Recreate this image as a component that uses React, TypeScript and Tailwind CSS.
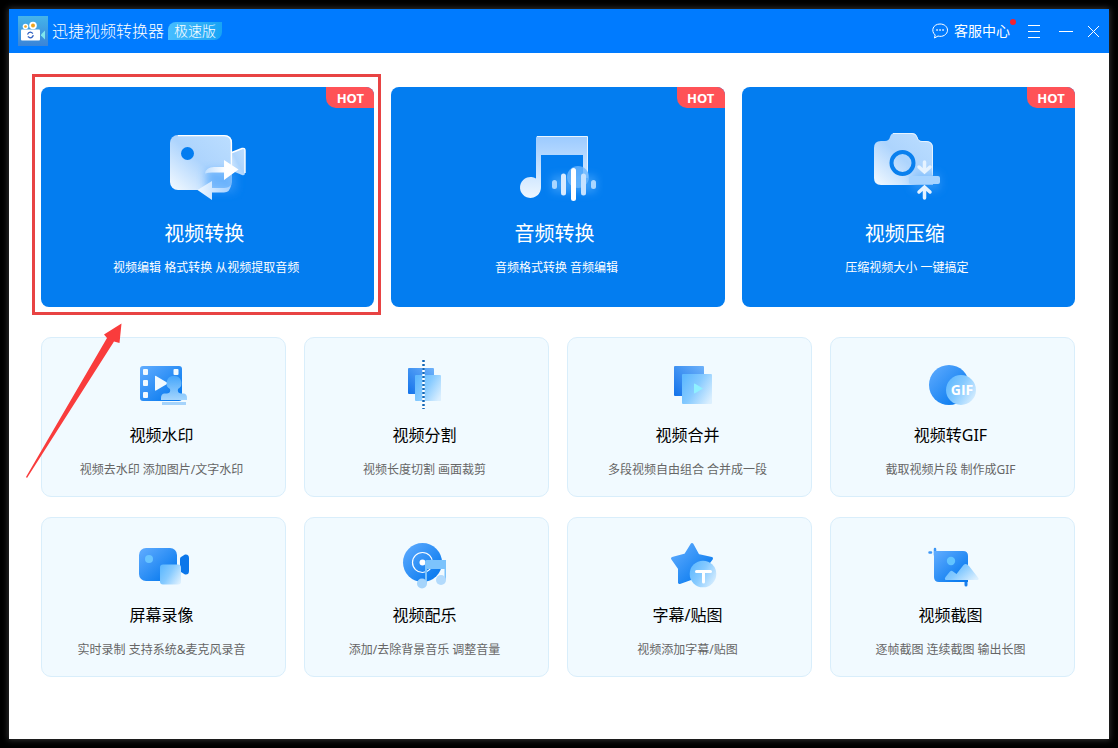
import type { ReactNode } from 'react';

type CardItem = {
    title: string;
    text: string;
    icon: ReactNode;
};

// gradients shared by all the icons
const IconDefs = () => (
    <svg className="absolute h-0 w-0" aria-hidden="true">
        <defs>
            <linearGradient id="glass" x1="1" y1="0" x2="0" y2="1">
                <stop offset="0" stopColor="#bcdeff" />
                <stop offset="0.5" stopColor="#add4fd" />
                <stop offset="1" stopColor="#f4faff" />
            </linearGradient>
            <linearGradient id="glassDown" x1="0" y1="0" x2="0" y2="1">
                <stop offset="0" stopColor="#9bcaff" />
                <stop offset="1" stopColor="#eef7ff" />
            </linearGradient>
            <linearGradient id="whiteRight" x1="0" y1="0" x2="1" y2="0">
                <stop offset="0" stopColor="#c2e0ff" />
                <stop offset="0.6" stopColor="#ffffff" />
            </linearGradient>
            <linearGradient id="whiteLeft" x1="1" y1="0" x2="0" y2="0">
                <stop offset="0" stopColor="#a4d0ff" />
                <stop offset="1" stopColor="#f2f9ff" />
            </linearGradient>
            <linearGradient id="deep" x1="0" y1="0" x2="1" y2="1">
                <stop offset="0" stopColor="#62adff" />
                <stop offset="0.8" stopColor="#0f7ef0" />
                <stop offset="1" stopColor="#0a78ec" />
            </linearGradient>
            <linearGradient id="deepUp" x1="1" y1="0" x2="0" y2="1">
                <stop offset="0" stopColor="#6fb2fa" />
                <stop offset="1" stopColor="#1272ea" />
            </linearGradient>
            <linearGradient id="soft" x1="0" y1="0.2" x2="1" y2="0.8">
                <stop offset="0" stopColor="#5fb9ff" />
                <stop offset="0.45" stopColor="#86caff" />
                <stop offset="1" stopColor="#dbeffe" />
            </linearGradient>
            <linearGradient id="softDown" x1="0" y1="0" x2="0" y2="1">
                <stop offset="0" stopColor="#45a6fb" />
                <stop offset="1" stopColor="#a4d5fd" />
            </linearGradient>
            <linearGradient id="logoBg" x1="0" y1="0" x2="0" y2="1">
                <stop offset="0" stopColor="#45b4ea" />
                <stop offset="1" stopColor="#3a84d8" />
            </linearGradient>
            <filter id="glow" x="-50%" y="-80%" width="200%" height="260%">
                <feGaussianBlur stdDeviation="4" />
            </filter>
        </defs>
    </svg>
);

const Logo = () => (
    <svg width="30" height="30" viewBox="0 0 30 30" aria-hidden="true">
        <rect width="30" height="30" fill="url(#logoBg)" />
        <circle cx="7.5" cy="10.5" r="2.8" fill="#fff" />
        <circle cx="15" cy="9.5" r="3.8" fill="#fff" />
        <circle cx="7.5" cy="10.5" r="1.3" fill="#f0a51e" />
        <circle cx="15" cy="9.5" r="2" fill="#f0a51e" />
        <rect x="3" y="13.5" width="19" height="11" rx="1" fill="#fff" />
        <path d="M23 18.5L27 14.5V23.5L23 19.5Z" fill="#7fe6ee" />
        <path
            d="M9.5 18.5Q10.5 15.8 13 16.3L15 17.5M9.8 20.5L12 21.8Q14.8 22 15.3 19.2"
            fill="none"
            stroke="#2f5fc0"
            strokeWidth="1.2"
        />
    </svg>
);

const ChatIcon = () => (
    <svg width="16" height="16" viewBox="0 0 16 16" fill="none" stroke="#fff" aria-hidden="true">
        <path d="M3.2 12C-1.500 8 1 1 8 1C12.500 1 15.500 3.800 15.500 7.200C15.500 11.500 10.500 14.500 6 13L2.500 15Z" strokeLinejoin="round" />
        <path d="M4.300 7h1.500M7.300 7h1.500M10.300 7h1.500" strokeWidth="1.400" />
    </svg>
);

const features: CardItem[] = [
    {
        title: '视频转换',
        text: '视频编辑 格式转换 从视频提取音频',
        icon: (
            <svg width="90" height="80" viewBox="13 10 90 80">
                <path d="M80 33L92 28.500Q95 27.800 95 30.500V53Q95 56 92 55L80 50Z" fill="url(#glass)" />
                <path d="M82 32.500L92 28.500Q95 27.800 95 30.500V53" fill="none" stroke="#fff" strokeWidth="1.400" />
                <rect x="20" y="15" width="62" height="55" rx="8" fill="url(#glass)" />
                <path d="M28 15.600H74Q81.400 15.600 81.400 23V54" fill="none" stroke="#fff" strokeWidth="1.400" />
                <path d="M56 50h30v22H56z" fill="#3f9dfb" opacity="0.6" filter="url(#glow)" />
                <circle cx="37.500" cy="33.500" r="6.500" fill="#037df0" />
                <path d="M55 53.500Q56 47 64 47H74V40L88.500 49.500L74 60V52.500H62Q58 52.500 55 53.500Z" fill="url(#whiteRight)" />
                <path d="M81 65Q80 72.500 74 72.500H62V80L47.500 70L62 61V68H74Q79 68 81 65Z" fill="url(#whiteLeft)" />
            </svg>
        ),
    },
    {
        title: '音频转换',
        text: '音频格式转换 音频编辑',
        icon: (
            <svg width="90" height="80" viewBox="13 10 90 80">
                <path
                    d="M36 18Q36 16 38 16H86Q88 16 88 18V58H83V35H41V67A10.500 10.500 0 1 1 36 58.500Z"
                    fill="url(#glassDown)"
                />
                <path d="M37 16.500H87.500V52" fill="none" stroke="#e9f5ff" />
                <circle cx="78" cy="57" r="11" fill="#6db7ff" opacity="0.8" />
                <rect x="52" y="56" width="44" height="16" fill="#69b9ff" opacity="0.5" filter="url(#glow)" />
                <g strokeWidth="5" strokeLinecap="round">
                    <path d="M54.500 62.500v4" stroke="#a9d6ff" />
                    <path d="M63.500 56v17" stroke="#d7ebff" />
                    <path d="M73.500 50.500v28" stroke="#fff" />
                    <path d="M83.500 56v17" stroke="#c5e2ff" />
                    <path d="M93.500 62.500v4" stroke="#a9d6ff" />
                </g>
            </svg>
        ),
    },
    {
        title: '视频压缩',
        text: '压缩视频大小 一键搞定',
        icon: (
            <svg width="90" height="80" viewBox="13 10 90 80">
                <path
                    d="M31 21H35Q39 21 40 17Q41 13 45 13H62Q66 13 67 17Q68 21 71 21H76Q83 21 83 28V65H31Q24 65 24 58V28Q24 21 31 21Z"
                    fill="url(#glass)"
                />
                <path d="M43 13.500H62Q66 13.500 67 17Q68 21.500 72 21.500H76Q82.500 21.500 82.500 28V55" fill="none" stroke="#e6f3ff" />
                <rect x="62" y="54" width="28" height="16" fill="#4ea6fb" opacity="0.5" filter="url(#glow)" />
                <circle cx="52.500" cy="43" r="11" fill="none" stroke="#0a80ee" strokeWidth="4" />
                <rect x="59" y="56" width="31" height="8" rx="2" fill="#a6d3ff" />
                <path
                    d="M74.500 42v9M69 47l5.500 5l5.500-5M74.500 78v-9M69 72l5.500-5l5.500 5"
                    fill="none"
                    stroke="#e6f3ff"
                    strokeWidth="3.500"
                    strokeLinecap="round"
                />
            </svg>
        ),
    },
];

const tools: CardItem[] = [
    {
        title: '视频水印',
        text: '视频去水印 添加图片/文字水印',
        icon: (
            <svg width="60" height="60" viewBox="113 25 60 60">
                <rect x="119" y="36" width="42" height="35" rx="3" fill="url(#deep)" />
                <g fill="#f1faff">
                    <rect x="122" y="39" width="5" height="6" rx="1" />
                    <rect x="122" y="50" width="5" height="6" rx="1" />
                    <rect x="122" y="62" width="5" height="6" rx="1" />
                    <rect x="152.500" y="39" width="5" height="6" rx="1" />
                    <path d="M134 46.500Q134 45.500 135 46L146 52.500Q147 53.500 146 54L135 60.500Q134 61 134 60Z" />
                </g>
                <path
                    d="M153 46A7 7 0 0 1 157 59Q156 63 160 63.500H163Q166 64 166 68V70H140V68Q140 64 143 63.500H146Q150 63 149 59A7 7 0 0 1 153 46Z"
                    fill="url(#softDown)"
                />
                <rect x="141" y="72" width="24" height="3" fill="#a5d3fb" />
            </svg>
        ),
    },
    {
        title: '视频分割',
        text: '视频长度切割 画面裁剪',
        icon: (
            <svg width="60" height="60" viewBox="16 5 60 60">
                <rect x="27" y="18" width="26" height="26" rx="1" fill="url(#deepUp)" />
                <rect x="34" y="25" width="26" height="26" rx="1" fill="url(#soft)" />
                <path d="M42.500 10v49" stroke="#fff" strokeWidth="2.500" />
                <path d="M42.500 10v49" stroke="#1167b8" strokeWidth="2.500" strokeDasharray="2 2" />
            </svg>
        ),
    },
    {
        title: '视频合并',
        text: '多段视频自由组合 合并成一段',
        icon: (
            <svg width="60" height="60" viewBox="10 5 60 60">
                <rect x="24" y="16" width="30" height="30" rx="1" fill="url(#deepUp)" />
                <rect x="32" y="24" width="30" height="30" rx="1" fill="url(#soft)" />
                <path d="M44 34.500Q44 33 45.500 34L53 38.500L45.500 43Q44 44 44 42.500Z" fill="#8ff0ff" />
            </svg>
        ),
    },
    {
        title: '视频转GIF',
        text: '截取视频片段 制作成GIF',
        icon: (
            <svg width="60" height="60" viewBox="13 5 60 60">
                <circle cx="39" cy="35" r="20" fill="url(#deep)" />
                <circle cx="51" cy="40" r="15" fill="url(#soft)" />
                <text x="52" y="45" textAnchor="middle" fontFamily="Open Sans" fontSize="14" fontWeight="700" fill="#fff">
                    GIF
                </text>
            </svg>
        ),
    },
    {
        title: '屏幕录像',
        text: '实时录制 支持系统&麦克风录音',
        icon: (
            <svg width="60" height="60" viewBox="13 5 60 60">
                <rect x="18" y="18" width="38" height="33" rx="7" fill="url(#deep)" />
                <circle cx="28" cy="29" r="4" fill="#68c4ff" />
                <path d="M59 29Q59 27.500 60 27L64 24.500Q68 24 68 28V41Q68 45 64 44.500L60 42Q59 41.500 59 40Z" fill="#0a76ea" />
                <rect x="39" y="34.500" width="21" height="20" rx="3" fill="url(#soft)" />
            </svg>
        ),
    },
    {
        title: '视频配乐',
        text: '添加/去除背景音乐 调整音量',
        icon: (
            <svg width="60" height="60" viewBox="16 5 60 60">
                <circle cx="41.500" cy="32.500" r="19.500" fill="url(#deep)" />
                <circle cx="41.500" cy="32.500" r="10" fill="none" stroke="#fff" strokeWidth="1.200" />
                <circle cx="41.500" cy="32.500" r="3" fill="#fff" />
                <path d="M44 31.500Q44 30 45.500 30H65V50H63.500V39H46V54H44Z" fill="#7cc3fc" />
                <circle cx="41" cy="53.500" r="5" fill="#a5d4fb" />
                <circle cx="60" cy="50" r="5" fill="#b2dafc" />
            </svg>
        ),
    },
    {
        title: '字幕/贴图',
        text: '视频添加字幕/贴图',
        icon: (
            <svg width="60" height="60" viewBox="280 5 60 60">
                <path
                    d="M312 14.500L318 25.500L331.500 28.500L323.500 39L325 52L312 48L299.500 52.500V38.500L292.500 28.500L305.500 25Z"
                    fill="url(#deep)"
                    stroke="url(#deep)"
                    strokeWidth="3"
                    strokeLinejoin="round"
                />
                <circle cx="323" cy="44" r="13.300" fill="url(#soft)" />
                <path d="M316.500 41.500h14M323.500 41.500v10.500" stroke="#fff" strokeWidth="3" strokeLinecap="round" />
            </svg>
        ),
    },
    {
        title: '视频截图',
        text: '逐帧截图 连续截图 输出长图',
        icon: (
            <svg width="60" height="60" viewBox="13 5 60 60">
                <path d="M25 19v6M19.500 22.500h1.500" stroke="#3c96f5" strokeWidth="2.500" strokeLinecap="round" />
                <path d="M56 51v4" stroke="#1a80ee" strokeWidth="3" strokeLinecap="round" />
                <path d="M24 21H53Q58 21 58 26V52H29Q24 52 24 47Z" fill="url(#deep)" />
                <circle cx="41" cy="31" r="4.200" fill="#62c4ff" />
                <path
                    d="M36 50Q34 49.500 35.500 47L40 41.500Q41.500 40 43 41.500L46.500 44L53.500 35Q56 32.500 59 36L68 47.500Q69.500 50 67 50Z"
                    fill="url(#soft)"
                />
            </svg>
        ),
    },
];

const TitleBar = () => (
    <header className="flex h-11 shrink-0 items-center justify-between bg-[#007bff] pr-2.5 pl-[9px] text-white">
        <div className="flex items-center">
            <Logo />
            <h1 className="ml-1 text-base leading-6 font-light">迅捷视频转换器</h1>
            <span className="ml-1 rounded-tl-lg rounded-br-lg bg-gradient-to-r from-[#45bdff] to-[#16a4f5] px-1.5 text-sm leading-[18px] font-light">
                极速版
            </span>
        </div>
        <nav className="flex items-center">
            <button type="button" className="relative flex items-center gap-1.5 text-sm">
                <ChatIcon />
                客服中心
                <span className="absolute -top-0.5 -right-1.5 h-1.5 w-1.5 rounded-full bg-[#f5222d]" />
            </button>
            <button type="button" aria-label="菜单" className="ml-[18px]">
                <svg width="12" height="13" viewBox="0 0 12 13" stroke="#fff">
                    <path d="M0 0.500h12M0 6.500h12M0 12.500h12" />
                </svg>
            </button>
            <button type="button" aria-label="最小化" className="ml-[19px]">
                <svg width="14" height="13" viewBox="0 0 14 13" stroke="#fff">
                    <path d="M0 6.500h14" />
                </svg>
            </button>
            <button type="button" aria-label="关闭" className="ml-[15px]">
                <svg width="11" height="13" viewBox="0 0 11 13" stroke="#fff">
                    <path d="M0 1l11 11M11 1L0 12" />
                </svg>
            </button>
        </nav>
    </header>
);

const FeatureCard = ({ item }: { item: CardItem }) => (
    <button
        type="button"
        className="relative flex min-h-[220px] w-full flex-col items-center rounded-lg bg-[#037df0] pt-[43px] text-white"
    >
        <span className="absolute top-0 right-0 h-[21px] w-12 rounded-tr-lg rounded-bl-[10px] bg-[#ff5257] text-center text-[13px] leading-[22px] font-bold">
            HOT
        </span>
        {item.icon}
        <span className="mt-2.5 pr-[7px] text-xl leading-7">{item.title}</span>
        <span className="mt-2.5 pr-[3px] text-xs leading-5">{item.text}</span>
    </button>
);

const ToolCard = ({ item }: { item: CardItem }) => (
    <button
        type="button"
        className="flex min-h-40 flex-col items-center rounded-[10px] border border-[#d9eefb] bg-[#f1faff] pt-[17px]"
    >
        {item.icon}
        <span className="mt-2 pr-1 text-base leading-6 text-black">{item.title}</span>
        <span className="mt-[13px] pr-1 text-xs leading-5 text-[#666]">{item.text}</span>
    </button>
);

const App = () => {
    return (
        <div className="flex min-h-screen flex-col bg-black p-[9px] font-['Noto_Sans','Noto_Sans_CJK_SC',sans-serif]">
            <IconDefs />
            <div className="flex grow flex-col bg-white shadow-[0_0_6px_1px_#333]">
                <TitleBar />
                <main className="relative flex flex-col gap-[30px] pt-[34px] pr-[34px] pb-[62px] pl-8">
                    <section className="grid grid-cols-3 gap-[17px]">
                        {features.map((item, index) => (
                            <div key={item.title} className="relative">
                                <FeatureCard item={item} />
                                {index === 0 && (
                                    <div className="pointer-events-none absolute -top-[13px] -right-[7px] -bottom-2 -left-[9px] border-3 border-[#e84343]" />
                                )}
                            </div>
                        ))}
                    </section>
                    <section className="grid grid-cols-4 gap-x-[18px] gap-y-5">
                        {tools.map((item) => (
                            <ToolCard key={item.title} item={item} />
                        ))}
                    </section>
                    {/* arrow pointing at the first card */}
                    <svg
                        className="pointer-events-none absolute top-[268px] left-4"
                        width="100"
                        height="160"
                        viewBox="0 0 100 160"
                        aria-hidden="true"
                    >
                        <path d="M1 156L82 17L79 13.500L96.500 2.500L94.500 22L89 20.500L2 157Z" fill="#f93c3c" />
                    </svg>
                </main>
            </div>
        </div>
    );
};

export default App;
